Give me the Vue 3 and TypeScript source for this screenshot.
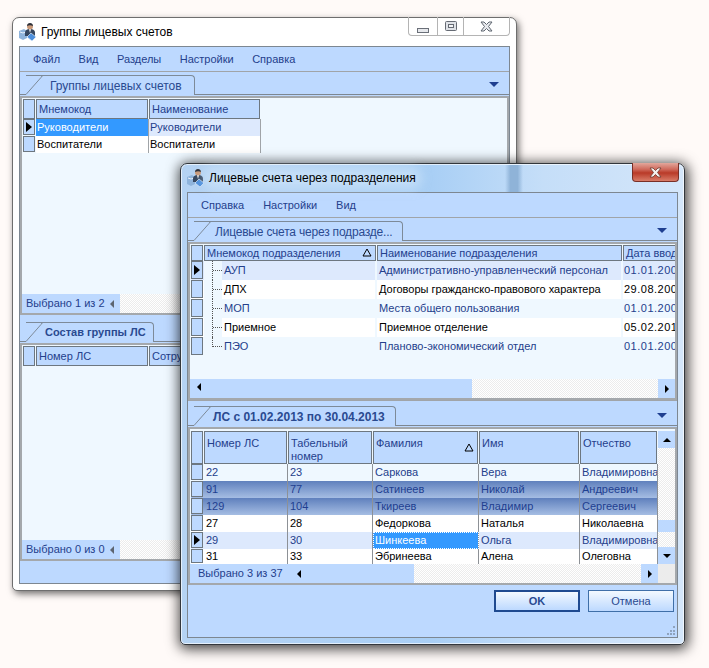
<template>
  <div class="desk">
    <!-- back window -->
    <section class="win win-back">
      <header class="title">
        <svg class="app-icon" viewBox="0 0 18 18"><path d="M0 8l5-2 3 2v7l-4 2-4-2z" fill="#8fb4dc"/><path d="M1 9l3 1 3-1" fill="none" stroke="#e8f0fa"/><path d="M6 10c0-3 2-4 5-4s5 1 5 4v3H6z" fill="#34465f"/><path d="M10 6h2l-1 4z" fill="#fff"/><circle cx="11" cy="3.500" r="3" fill="#c99a7a"/><path d="M8 3c0-2 1.500-3 3-3s3 1 3 3c-2-1-4-1-6 0z" fill="#2a2f3a"/><path d="M12 10l5 4-4 4-5-4z" fill="#4d8fdc" stroke="#dbe9f8" stroke-width=".7"/></svg>
        <span class="title-text">Группы лицевых счетов</span>
        <div class="ctl-group">
          <span class="ctl ctl-min"><i class="min-glyph"></i></span>
          <span class="ctl ctl-max"><svg width="12" height="10" viewBox="0 0 12 10"><rect x=".5" y=".5" width="11" height="9" rx="1" fill="#dfe2e7" stroke="#666b74"/><rect x="3.500" y="3.500" width="5" height="3" fill="#f4f5f7" stroke="#666b74"/></svg></span>
          <span class="ctl ctl-close"><svg width="13" height="11" viewBox="0 0 13 11"><path d="M1 1h3l2.500 2.500L9 1h3L8.500 5.500 12 10H9L6.500 7.500 4 10H1l3.500-4.500z" fill="#e8eaee" stroke="#5f6670" stroke-width="1"/></svg></span>
        </div>
      </header>
      <div class="client back-client">
        <nav class="menu menu-back">
          <span v-for="m in backMenu" :key="m">{{ m }}</span>
        </nav>
        <div class="strip strip-first">
          <span class="strip-lead"></span>
          <div class="tab tab-back-top">
            <svg class="slant" width="17" height="20" viewBox="0 0 17 20"><path d="M0 19.500L15 2.500Q16 .5 17 .5" fill="none" stroke="#7d8a98"/></svg>
            <span class="tab-label">Группы лицевых счетов</span>
          </div>
          <span class="strip-rest"><i class="drop"></i></span>
        </div>
        <div class="pane back-pane-top">
          <div class="grid">
            <div class="grid-row head-row h20">
              <span class="row-head"></span>
              <span v-for="c in backCols" :key="c.name" class="head-cell" :style="{ width: c.w - 1 + 'px' }">{{ c.name }}</span>
            </div>
            <div v-for="(r, i) in backRows" :key="r[0]" class="grid-row h17">
              <span class="row-head"><i v-if="i === 0" class="marker"></i></span>
              <span class="cell back-cell" :class="i === 0 ? 'cell-sel' : 'cell-white'">{{ r[0] }}</span>
              <span class="cell back-cell" :class="i === 0 ? 'cell-focus' : 'cell-white'">{{ r[1] }}</span>
            </div>
          </div>
          <div class="spacer"></div>
          <div class="bar">
            <span class="bar-status back-status">Выбрано 1 из 2<i class="arrow-left gray"></i></span>
            <span class="dither"></span>
          </div>
        </div>
        <div class="strip strip-second">
          <span class="strip-lead"></span>
          <div class="tab tab-back-bottom">
            <svg class="slant" width="17" height="20" viewBox="0 0 17 20"><path d="M0 19.500L15 2.500Q16 .5 17 .5" fill="none" stroke="#7d8a98"/></svg>
            <span class="tab-label bold">Состав группы ЛС</span>
          </div>
          <span class="strip-rest"></span>
        </div>
        <div class="pane back-pane-bottom">
          <div class="grid">
            <div class="grid-row head-row h20">
              <span class="row-head"></span>
              <span class="head-cell" style="width: 112px">Номер ЛС</span>
              <span class="head-cell" style="width: 112px">Сотрудник</span>
            </div>
          </div>
          <div class="spacer"></div>
          <div class="bar">
            <span class="bar-status back-status">Выбрано 0 из 0<i class="arrow-left gray"></i></span>
            <span class="dither"></span>
          </div>
        </div>
      </div>
    </section>

    <!-- front dialog -->
    <section class="win win-front">
      <span class="glass-streak"></span>
      <header class="title">
        <svg class="app-icon" viewBox="0 0 18 18"><path d="M0 8l5-2 3 2v7l-4 2-4-2z" fill="#8fb4dc"/><path d="M1 9l3 1 3-1" fill="none" stroke="#e8f0fa"/><path d="M6 10c0-3 2-4 5-4s5 1 5 4v3H6z" fill="#34465f"/><path d="M10 6h2l-1 4z" fill="#fff"/><circle cx="11" cy="3.500" r="3" fill="#c99a7a"/><path d="M8 3c0-2 1.500-3 3-3s3 1 3 3c-2-1-4-1-6 0z" fill="#2a2f3a"/><path d="M12 10l5 4-4 4-5-4z" fill="#4d8fdc" stroke="#dbe9f8" stroke-width=".7"/></svg>
        <span class="title-text glow">Лицевые счета через подразделения</span>
        <span class="ctl-red"><svg width="13" height="11" viewBox="0 0 13 11"><path d="M1 1h3l2.500 2.500L9 1h3L8.500 5.500 12 10H9L6.500 7.500 4 10H1l3.500-4.500z" fill="#f4f1ee" stroke="#6b3a30" stroke-width=".8"/></svg></span>
      </header>
      <div class="client front-client">
        <nav class="menu">
          <span v-for="m in frontMenu" :key="m">{{ m }}</span>
        </nav>
        <div class="strip strip-first">
          <span class="strip-lead"></span>
          <div class="tab tab-front-top">
            <svg class="slant" width="17" height="20" viewBox="0 0 17 20"><path d="M0 19.500L15 2.500Q16 .5 17 .5" fill="none" stroke="#7d8a98"/></svg>
            <span class="tab-label">Лицевые счета через подразде...</span>
          </div>
          <span class="strip-rest"><i class="drop"></i></span>
        </div>
        <div class="pane front-pane-top">
          <div class="grid">
            <div class="grid-row head-row h16">
              <span class="row-head"></span>
              <span v-for="c in deptCols" :key="c.name" class="head-cell" :style="{ width: c.w - 1 + 'px' }">
                {{ c.name }}<svg v-if="c.sorted" class="sort" width="10" height="9" viewBox="0 0 10 9"><path d="M5 1L9 8H1z" fill="none" stroke="#000"/></svg>
              </span>
            </div>
            <div v-for="(r, i) in deptRows" :key="r.code" class="grid-row dept-row" :class="rowTone(i)">
              <span class="row-head"><i v-if="i === 0" class="marker"></i></span>
              <span class="tree-cell">
                <i class="tree-line" :class="{ last: i === deptRows.length - 1 }"></i>
                <span class="cell dept-code">{{ r.code }}</span>
              </span>
              <span class="cell dept-name">{{ r.name }}</span>
              <span class="cell dept-date">{{ r.date }}</span>
            </div>
          </div>
          <div class="spacer"></div>
          <div class="bar h17">
            <span class="bar-status front-scroll"><i class="arrow-left first"></i></span>
            <span class="dither"></span>
            <span class="scroll-btn"><i class="arrow-right"></i></span>
          </div>
        </div>
        <div class="strip strip-lower">
          <span class="strip-lead"></span>
          <div class="tab tab-front-bottom">
            <svg class="slant" width="17" height="20" viewBox="0 0 17 20"><path d="M0 19.500L15 2.500Q16 .5 17 .5" fill="none" stroke="#7d8a98"/></svg>
            <span class="tab-label bold wide">ЛС с 01.02.2013 по 30.04.2013</span>
          </div>
          <span class="strip-rest"><i class="drop"></i></span>
        </div>
        <div class="pane front-pane-bottom">
          <div class="lower-body">
            <div class="grid lower-grid">
              <div class="grid-row head-row h33">
                <span class="row-head"></span>
                <span v-for="c in staffCols" :key="c.name" class="head-cell top" :style="{ width: c.w - 1 + 'px' }">
                  <span class="wrap">{{ c.name }}</span>
                  <svg v-if="c.sorted" class="sort" width="10" height="9" viewBox="0 0 10 9"><path d="M5 1L9 8H1z" fill="none" stroke="#000"/></svg>
                </span>
              </div>
              <div v-for="(r, i) in staffRows" :key="r.num" class="grid-row staff-row" :class="r.tone">
                <span class="row-head"><i v-if="i === 4" class="marker"></i></span>
                <span v-for="(v, k) in r.cells" :key="k" class="cell line" :class="{ 'cell-current': i === 4 && k === 2 }" :style="{ width: staffCols[k].w + 'px' }">{{ v }}</span>
              </div>
            </div>
            <div class="vscroll">
              <span class="scroll-btn tall"><i class="arrow-up"></i></span>
              <span class="dither"></span>
              <span class="thumb"></span>
              <span class="dither short"></span>
              <span class="scroll-btn tall"><i class="arrow-down"></i></span>
            </div>
          </div>
          <div class="bar h19">
            <span class="bar-status front-status">Выбрано 3 из 37<i class="arrow-left dark"></i></span>
            <span class="dither"></span>
            <span class="scroll-btn"><i class="arrow-right"></i></span>
            <span class="corner"></span>
          </div>
        </div>
        <footer class="actions">
          <button class="btn btn-ok" type="button">OK</button>
          <button class="btn" type="button">Отмена</button>
          <svg class="grip" width="10" height="10" viewBox="0 0 10 10"><path d="M7 0h2v2H7zM4 4h2v2H4zM7 4h2v2H7zM1 7h2v2H1zM4 7h2v2H4zM7 7h2v2H7z" fill="#8fa3bd"/></svg>
        </footer>
      </div>
    </section>
  </div>
</template>

<script setup lang="ts">
interface Col {
  name: string
  w: number
  sorted?: boolean
}

const backMenu = ['Файл', 'Вид', 'Разделы', 'Настройки', 'Справка']
const frontMenu = ['Справка', 'Настройки', 'Вид']

const backCols: Col[] = [
  { name: 'Мнемокод', w: 113 },
  { name: 'Наименование', w: 112 }
]
const backRows = [
  ['Руководители', 'Руководители'],
  ['Воспитатели', 'Воспитатели']
]

const deptCols: Col[] = [
  { name: 'Мнемокод подразделения', w: 173, sorted: true },
  { name: 'Наименование подразделения', w: 246 },
  { name: 'Дата ввода', w: 60 }
]
const deptRows = [
  { code: 'АУП', name: 'Административно-управленческий персонал', date: '01.01.2001' },
  { code: 'ДПХ', name: 'Договоры гражданско-правового характера', date: '29.08.2006' },
  { code: 'МОП', name: 'Места общего пользования', date: '01.01.2001' },
  { code: 'Приемное', name: 'Приемное отделение', date: '05.02.2010' },
  { code: 'ПЭО', name: 'Планово-экономический отдел', date: '01.01.2006' }
]

const rowTone = (i: number) => {
  if (i === 0) return 'tone-focus'
  return i % 2 ? 'tone-white' : 'tone-pale'
}

const staffCols: Col[] = [
  { name: 'Номер ЛС', w: 84 },
  { name: 'Табельный номер', w: 85 },
  { name: 'Фамилия', w: 106, sorted: true },
  { name: 'Имя', w: 101 },
  { name: 'Отчество', w: 78 }
]
const staffRows = [
  { num: '22', tone: 'tone-pale', cells: ['22', '23', 'Саркова', 'Вера', 'Владимировна'] },
  { num: '91', tone: 'tone-picked', cells: ['91', '77', 'Сатинеев', 'Николай', 'Андреевич'] },
  { num: '129', tone: 'tone-picked', cells: ['129', '104', 'Ткиреев', 'Владимир', 'Сергеевич'] },
  { num: '27', tone: 'tone-white', cells: ['27', '28', 'Федоркова', 'Наталья', 'Николаевна'] },
  { num: '29', tone: 'tone-focus', cells: ['29', '30', 'Шинкеева', 'Ольга', 'Владимировна'] },
  { num: '31', tone: 'tone-white', cells: ['31', '33', 'Эбринеева', 'Алена', 'Олеговна'] }
]
</script>

<style>
html,
body {
  margin: 0;
  background: #fffaf8;
}
</style>

<style scoped>
.desk {
  position: relative;
  width: 709px;
  height: 668px;
  overflow: hidden;
  font: 11px/1 "Liberation Sans", Arial, sans-serif;
  color: #000;
}

.win {
  position: absolute;
  box-sizing: border-box;
  display: flex;
  flex-direction: column;
  border-radius: 7px 7px 5px 5px;
}

.win-back {
  left: 12px;
  top: 17px;
  width: 505px;
  height: 574px;
  padding: 0 6px 6px;
  background: #fff;
  border: 1px solid #6e6e6e;
  box-shadow: 2px 3px 7px rgba(0, 0, 0, 0.55);
}

.win-front {
  left: 180px;
  top: 163px;
  width: 505px;
  height: 482px;
  padding: 0 6px 6px;
  background: linear-gradient(90deg, #b5d3f3 0%, #a9cff5 50%, #c5def8 72%, #d4e6fa 100%);
  border: 1px solid #33373c;
  box-shadow: 1px 2px 13px 2px rgba(0, 0, 0, 0.75), inset 0 0 0 1px rgba(255, 255, 255, 0.65);
}

.glass-streak {
  position: absolute;
  left: 324px;
  top: 1px;
  width: 18px;
  height: 27px;
  background: linear-gradient(90deg, transparent, #8fb3d8 30%, #8fb3d8 70%, transparent);
}

.title {
  position: relative;
  flex: none;
  height: 28px;
  display: flex;
  align-items: center;
  gap: 4px;
}

.app-icon {
  width: 18px;
  height: 18px;
  flex: none;
}

.title-text {
  font-size: 12px;
  color: #000;
}

.glow {
  border-radius: 8px;
  background: rgba(214, 234, 252, 0.5);
  box-shadow: 0 0 10px 6px rgba(214, 234, 252, 0.5);
}

.ctl-group {
  position: absolute;
  right: 0;
  top: -1px;
  width: 102px;
  height: 19px;
  display: flex;
  box-sizing: border-box;
  border: 1px solid #b4b4b4;
  border-top: 0;
  border-radius: 0 0 4px 4px;
}

.ctl {
  display: flex;
  align-items: center;
  justify-content: center;
  box-sizing: border-box;
  border-right: 1px solid #b4b4b4;
}

.ctl-min {
  width: 29px;
}

.ctl-max {
  width: 26px;
}

.ctl-close {
  flex: 1;
  border-right: 0;
}

.min-glyph {
  width: 10px;
  height: 3px;
  margin-top: 8px;
  background: #e6e8ec;
  border: 1px solid #6a6f78;
}

.ctl-red {
  position: absolute;
  right: -1px;
  top: -1px;
  width: 47px;
  height: 19px;
  display: flex;
  align-items: center;
  justify-content: center;
  box-sizing: border-box;
  border: 1px solid #7a2f26;
  border-top: 0;
  border-radius: 0 0 4px 4px;
  background: linear-gradient(#e2a79c 0%, #cf6a5c 35%, #b93a28 55%, #d87c68 100%);
}

.client {
  flex: 1;
  min-height: 0;
  display: flex;
  flex-direction: column;
  background: #bdd9ff;
  border: 1px solid #7d8791;
}

.menu {
  flex: none;
  height: 24px;
  display: flex;
  align-items: center;
  gap: 19px;
  padding-left: 13px;
  color: #24408c;
}

.menu-back {
  gap: 18.500px;
}

.strip {
  flex: none;
  display: flex;
  align-items: flex-end;
  height: 24px;
  box-sizing: border-box;
}

.strip-first {
  border-top: 1px solid #a0a4a8;
}

.strip-second {
  height: 27px;
}

.strip-lower {
  height: 26px;
  border-top: 1px solid #a0a4a8;
}

.strip-lead {
  width: 6px;
  height: 100%;
  flex: none;
  box-sizing: border-box;
  border-bottom: 1px solid #7d8791;
}

.strip-rest {
  flex: 1;
  height: 100%;
  position: relative;
  box-sizing: border-box;
  border-bottom: 1px solid #7d8791;
}

.drop {
  position: absolute;
  right: 10px;
  bottom: 7px;
  width: 0;
  height: 0;
  border: 5px solid transparent;
  border-top: 5px solid #1f3f90;
  border-bottom: 0;
}

.tab {
  position: relative;
  height: 20px;
  flex: none;
  box-sizing: border-box;
  border-top: 1px solid #7d8a98;
  border-right: 1px solid #7d8a98;
  border-radius: 0 4px 0 0;
  display: flex;
  align-items: center;
  margin-top: auto;
}

.tab-back-top {
  width: 169px;
  padding-left: 24px;
}

.tab-back-bottom {
  width: 128px;
  padding-left: 19px;
}

.tab-front-top {
  width: 209px;
  padding-left: 21px;
}

.tab-front-bottom {
  width: 202px;
  padding-left: 19px;
}

.slant {
  position: absolute;
  left: 0;
  top: -1px;
}

.tab-label {
  color: #2a4a90;
  white-space: nowrap;
  font-size: 12px;
}

.tab-front-top .tab-label {
  letter-spacing: -0.2px;
}

.tab-label.bold {
  font-size: 11px;
  font-weight: 700;
}

.tab-label.wide {
  font-size: 12px;
}

.pane {
  flex: none;
  display: flex;
  flex-direction: column;
  box-sizing: border-box;
  margin-top: 1px;
  padding: 1px 0 0 3px;
  background: #eff8ff;
  border: 2px solid #a4a8ac;
  border-left: 0;
  box-shadow: inset 2px 0 0 #a4a8ac;
}

.back-pane-top {
  height: 219px;
}

.back-pane-bottom {
  height: 218px;
}

.front-pane-top {
  height: 158px;
}

.front-pane-bottom {
  height: 158px;
  padding-top: 2px;
}

.grid {
  flex: none;
  display: flex;
  flex-direction: column;
  overflow: hidden;
}

.grid-row {
  display: flex;
  flex: none;
}

.h16 {
  height: 16px;
}

.h17 {
  height: 17px;
}

.h19 {
  height: 19px;
}

.h20 {
  height: 20px;
}

.h33 {
  height: 33px;
}

.dept-row {
  height: 19px;
}

.staff-row {
  height: 17px;
}

.staff-row:last-child {
  height: 15px;
}

.row-head {
  position: relative;
  flex: none;
  width: 12px;
  box-sizing: border-box;
  background: #bdd9ff;
  border: 1px solid #6d7780;
  margin-right: 1px;
}

.grid-row:not(.head-row) > .row-head {
  margin-bottom: 1px;
}

.marker {
  position: absolute;
  left: 2px;
  top: 50%;
  margin-top: -5px;
  width: 0;
  height: 0;
  border-left: 6px solid #000;
  border-top: 5px solid transparent;
  border-bottom: 5px solid transparent;
}

.head-cell {
  position: relative;
  flex: none;
  box-sizing: border-box;
  display: flex;
  align-items: center;
  padding-left: 2px;
  background: #bdd9ff;
  color: #24408c;
  border: 1px solid #6d7780;
  margin-right: 1px;
  white-space: nowrap;
  overflow: hidden;
}

.head-cell.top {
  align-items: flex-start;
  padding-top: 5px;
  line-height: 13px;
}

.wrap {
  white-space: normal;
}

.sort {
  position: absolute;
  right: 3px;
  top: 50%;
  margin-top: -5px;
}

.cell {
  flex: none;
  box-sizing: border-box;
  display: flex;
  align-items: center;
  padding-left: 2px;
  white-space: nowrap;
  overflow: hidden;
}

.back-cell {
  width: 113px;
  padding-left: 1px;
}

.back-cell + .back-cell {
  width: 112px;
}

.cell-white {
  background: #fff;
  border-right: 1px solid #a0a4a8;
}

.cell-sel {
  background: #3399ff;
  color: #fff;
  border-right: 1px solid #a0a4a8;
}

.cell-focus {
  background: #dde9fd;
  color: #24408c;
  border-right: 1px solid #a0a4a8;
}

.tone-focus {
  background: #dde9fd;
  color: #24408c;
}

.tone-white {
  background: #fff;
  color: #000;
}

.tone-pale {
  background: #eff8ff;
  color: #24408c;
}

.tone-picked {
  background: linear-gradient(#5f80bd, #a5bde3);
  color: #1f3f90;
}

.tree-cell {
  flex: none;
  width: 173px;
  display: flex;
  box-sizing: border-box;
}

.tree-line {
  position: relative;
  flex: none;
  width: 18px;
  background: #eff8ff;
}

.tree-line::before {
  content: '';
  position: absolute;
  left: 8px;
  top: 0;
  bottom: 0;
  border-left: 1px dotted #555;
}

.tree-line.last::before {
  bottom: 9px;
}

.tree-line::after {
  content: '';
  position: absolute;
  left: 9px;
  right: 0;
  top: 9px;
  border-top: 1px dotted #555;
}

.dept-code {
  flex: 1;
  border-right: 2px solid #eff8ff;
}

.dept-name {
  width: 246px;
  border-right: 2px solid #eff8ff;
}

.dept-date {
  width: 60px;
  letter-spacing: 0.5px;
  padding-left: 1px;
}

.line {
  border-right: 1px solid #8d9196;
}

.cell-current {
  background: #3399ff;
  color: #fff;
  outline: 1px dotted #fff;
  outline-offset: -1px;
}

.spacer {
  flex: 1;
}

.bar {
  flex: none;
  display: flex;
  height: 19px;
  margin-left: -1px;
}

.bar-status {
  position: relative;
  flex: none;
  display: flex;
  align-items: center;
  box-sizing: border-box;
  background: #bdd9ff;
  color: #24408c;
}

.back-status {
  width: 98px;
  padding-left: 4px;
}

.front-scroll {
  width: 282px;
}

.front-status {
  width: 224px;
  padding-left: 8px;
}

.dither {
  flex: 1;
  display: block;
  background: repeating-conic-gradient(#ececec 0% 25%, #fff 0% 50%) 0 0 / 2px 2px;
}

.dither.short {
  flex: none;
  height: 15px;
}

.scroll-btn {
  flex: none;
  width: 17px;
  display: flex;
  align-items: center;
  justify-content: center;
  background: #bdd9ff;
}

.scroll-btn.tall {
  height: 17px;
  width: 100%;
}

.corner {
  flex: none;
  width: 17px;
  background: #ececec;
}

.arrow-left {
  position: absolute;
  right: 6px;
  top: 6px;
  width: 0;
  height: 0;
  border-right: 4px solid #000;
  border-top: 4px solid transparent;
  border-bottom: 4px solid transparent;
}

.arrow-left.gray {
  border-right-color: #5d6570;
}

.arrow-left.dark {
  right: auto;
  left: 107px;
}

.arrow-left.first {
  right: auto;
  left: 7px;
  top: 4px;
}

.arrow-right {
  width: 0;
  height: 0;
  border-left: 4px solid #000;
  border-top: 4px solid transparent;
  border-bottom: 4px solid transparent;
}

.arrow-up {
  width: 0;
  height: 0;
  border-bottom: 4px solid #000;
  border-left: 4px solid transparent;
  border-right: 4px solid transparent;
}

.arrow-down {
  width: 0;
  height: 0;
  border-top: 4px solid #000;
  border-left: 4px solid transparent;
  border-right: 4px solid transparent;
}

.lower-body {
  flex: 1;
  min-height: 0;
  display: flex;
}

.lower-grid {
  flex: none;
  width: 467px;
}

.vscroll {
  flex: none;
  width: 17px;
  display: flex;
  flex-direction: column;
}

.thumb {
  flex: none;
  height: 12px;
  background: #bdd9ff;
}

.actions {
  position: relative;
  flex: 1;
  display: flex;
  justify-content: flex-end;
  align-items: flex-start;
  gap: 8px;
  padding: 5px 3px 0 0;
}

.btn {
  width: 86px;
  height: 22px;
  padding: 0;
  font: 11px "Liberation Sans", Arial, sans-serif;
  color: #2a4a90;
  background: linear-gradient(#f3f9ff, #bdd9ff);
  border: 1px solid #3f6fa8;
}

.btn-ok {
  font-weight: 700;
  border: 2px solid #1f4a90;
}

.grip {
  position: absolute;
  right: 1px;
  bottom: 1px;
}
</style>
